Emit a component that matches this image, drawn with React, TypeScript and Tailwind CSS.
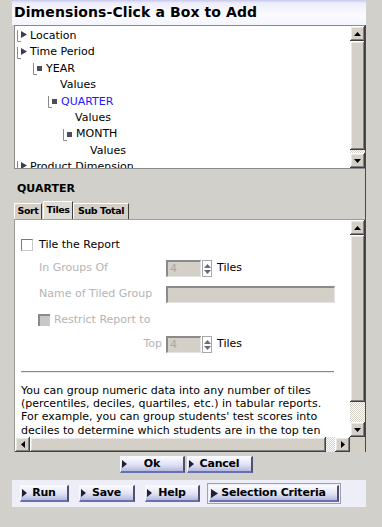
import React from 'react';

const btnFace =
  'bg-[#d4d0c8] shadow-[inset_-1px_-1px_#404040,inset_1px_1px_#ffffff,inset_-2px_-2px_#808080,inset_2px_2px_#e8e8e8]';
const checker =
  'bg-[repeating-conic-gradient(#ffffff_0_25%,#d4d0c8_0_50%)] bg-[length:2px_2px]';

const Arrow: React.FC<{ dir: 'up' | 'down' | 'left' | 'right'; color?: string }> = ({ dir, color = '#000' }) => {
  const pts = {
    up: '0,4 3.5,0 7,4',
    down: '0,0 7,0 3.5,4',
    left: '4,0 4,7 0,3.5',
    right: '0,0 4,3.5 0,7',
  }[dir];
  const vertical = dir === 'up' || dir === 'down';
  return (
    <svg width={vertical ? 7 : 4} height={vertical ? 4 : 7}>
      <polygon points={pts} fill={color} />
    </svg>
  );
};

const SbButton: React.FC<{ dir: 'up' | 'down' | 'left' | 'right' }> = ({ dir }) => (
  <div className={`w-[15px] h-[15px] shrink-0 flex items-center justify-center ${btnFace}`}>
    <Arrow dir={dir} />
  </div>
);

const VScroll: React.FC<{ track: number }> = ({ track }) => (
  <div className="w-[15px] flex flex-col shrink-0">
    <SbButton dir="up" />
    <div className={`flex-1 ${btnFace}`} />
    <div className={checker} style={{ height: track }} />
    <SbButton dir="down" />
  </div>
);

const NodeIcon: React.FC<{ kind: 'tri' | 'sq' }> = ({ kind }) => (
  <svg width="14" height="16" className="shrink-0">
    <path d="M1.5 2 V13.5 H5" fill="none" stroke="#8a8a8a" strokeWidth="1" />
    {kind === 'tri' ? (
      <polygon points="5,3 11,6.5 5,10" fill="#3c3c50" />
    ) : (
      <rect x="5" y="5" width="5" height="5" fill="#4c4c5c" />
    )}
  </svg>
);

const TreeRow: React.FC<{ indent: number; icon?: 'tri' | 'sq'; label: string; blue?: boolean }> = ({
  indent,
  icon,
  label,
  blue,
}) => (
  <div className="h-[16.4px] flex items-center whitespace-nowrap" style={{ paddingLeft: indent }}>
    {icon && <NodeIcon kind={icon} />}
    <span className={blue ? 'text-[#1a1aff]' : 'text-black'}>{label}</span>
  </div>
);

const Spinner: React.FC = () => (
  <div className="w-[10px] h-[17px] border border-[#a8a8a8] flex flex-col items-center justify-center gap-[2px] ml-[1px]">
    <Arrow dir="up" color="#6a6a7a" />
    <Arrow dir="down" color="#6a6a7a" />
  </div>
);

const DisabledInput: React.FC<{ w: number; value?: string }> = ({ w, value }) => (
  <div
    className="h-[17px] bg-[#d4d0c8] border-t-2 border-l-2 border-[#8a8a8a] border-r border-r-[#e4e4e4] border-b border-b-[#e4e4e4] text-[#a8a8a8] pl-[2px] leading-[14px]"
    style={{ width: w }}
  >
    {value}
  </div>
);

const UiButton: React.FC<{ label: string; w: number; dark?: boolean }> = ({ label, w, dark }) => (
  <div
    className="relative h-[17px] flex items-center justify-center font-bold text-[11px] text-black border-l border-t border-[#f8f8ff] border-r-2 border-r-[#505070] border-b-2 border-b-[#6870b0] bg-[linear-gradient(#fafaff,#e0e2f4_55%,#b4badf)] tracking-[-0.2px]"
    style={{ width: w }}
  >
    <span className="absolute left-[1px] top-[3px]">
      {dark ? (
        <svg width="7" height="9">
          <polygon points="0,0 7,4.5 0,9" fill="#202030" />
        </svg>
      ) : (
        <svg width="5" height="8">
          <polygon points="0,0 5,4 0,8" fill="#202030" />
        </svg>
      )}
    </span>
    {label}
  </div>
);

export default function App() {
  return (
    <div className="w-[382px] h-[527px] bg-[#d2d0ca] overflow-hidden font-['DejaVu_Sans',sans-serif] text-[11px]">
      <div className="ml-[12px] w-[354px]">
        {/* title */}
        <div className="h-[25px] bg-[linear-gradient(#c8c8f0_0,#eeeefa_3px,#fbfbff_60%,#f4f4fc)] pl-[2px] flex items-center">
          <h1 className="text-[14px] font-bold text-black leading-none tracking-[0.1px] -mt-[2px]">
            Dimensions-Click a Box to Add
          </h1>
        </div>

        <div className="ml-[2px] w-[352px] border-r border-[#4a4a4a]">
          {/* tree */}
          <div className="h-[144px] flex border-l border-t border-b border-[#8a8a8a]">
            <div className="flex-1 bg-white pt-[2px] overflow-hidden">
              <TreeRow indent={1} icon="tri" label="Location" />
              <TreeRow indent={1} icon="tri" label="Time Period" />
              <TreeRow indent={17} icon="sq" label="YEAR" />
              <TreeRow indent={45} label="Values" />
              <TreeRow indent={32} icon="sq" label="QUARTER" blue />
              <TreeRow indent={60} label="Values" />
              <TreeRow indent={47} icon="sq" label="MONTH" />
              <TreeRow indent={75} label="Values" />
              <TreeRow indent={1} icon="tri" label="Product Dimension" />
            </div>
            <VScroll track={3} />
          </div>

          {/* section */}
          <div className="mt-[13px] ml-[3px] font-bold text-[11px] leading-[13px] text-black">QUARTER</div>

          {/* tabs */}
          <div className="mt-[6px] h-[18px] flex items-end">
            <div className="h-[16px] w-[28px] bg-[#d4d0c8] border-l border-t border-white border-r border-r-[#404040] font-bold text-[9.5px] tracking-[-0.4px] flex items-center justify-center">
              Sort
            </div>
            <div className="h-[18px] w-[30px] ml-[1px] bg-[#dedcd6] border-l border-t border-white border-r border-r-[#404040] font-bold text-[9.5px] tracking-[-0.4px] flex items-start pt-[1px] justify-center">
              Tiles
            </div>
            <div className="h-[16px] w-[56px] bg-[#d4d0c8] border-l border-t border-white border-r border-r-[#404040] font-bold text-[9.5px] tracking-[-0.4px] flex items-center justify-center">
              Sub Total
            </div>
          </div>

          {/* panel */}
          <div className="border-t border-l border-[#9c9c9c] flex flex-col">
            <div className="h-[217px] flex">
              <div className="flex-1 bg-white overflow-hidden flex flex-col">
                <div className="mt-[18px] ml-[6px] h-[14px] flex items-center">
                  <div className="w-[12px] h-[12px] border-t border-l border-[#7a7a7a] border-r border-b border-r-[#c8c8c8] border-b-[#c8c8c8] bg-white" />
                  <span className="ml-[6px] text-black">Tile the Report</span>
                </div>

                <div className="mt-[8px] ml-[24px] h-[17px] flex items-center text-[#b4b4b4]">
                  <span className="w-[127px]">In Groups Of</span>
                  <DisabledInput w={35} value="4" />
                  <Spinner />
                  <span className="ml-[5px] text-black">Tiles</span>
                </div>

                <div className="mt-[9px] ml-[24px] h-[17px] flex items-center text-[#b4b4b4]">
                  <span className="w-[127px]">Name of Tiled Group</span>
                  <DisabledInput w={169} />
                </div>

                <div className="mt-[10px] ml-[23px] h-[14px] flex items-center text-[#b4b4b4]">
                  <div className="w-[12px] h-[12px] border-t-2 border-l-2 border-[#8a8a8a] bg-[#c8c8c8]" />
                  <span className="ml-[4px]">Restrict Report to</span>
                </div>

                <div className="mt-[9px] ml-[24px] h-[17px] flex items-center text-[#b4b4b4]">
                  <span className="w-[127px] text-right pr-[4px]">Top</span>
                  <DisabledInput w={35} value="4" />
                  <Spinner />
                  <span className="ml-[5px] text-black">Tiles</span>
                </div>

                <div className="mt-[18px] ml-[6px] w-[313px] border-t border-[#8a8a8a] border-b border-b-[#e8e8e8]" />

                <p className="mt-[11px] ml-[6px] leading-[13.2px] text-black whitespace-nowrap">
                  You can group numeric data into any number of tiles
                  <br />
                  (percentiles, deciles, quartiles, etc.) in tabular reports.
                  <br />
                  For example, you can group students' test scores into
                  <br />
                  deciles to determine which students are in the top ten
                </p>
              </div>
              <VScroll track={20} />
            </div>

            <div className="h-[15px] flex">
              <SbButton dir="left" />
              <div className={`flex-1 ${btnFace}`} />
              <div className={`w-[9px] ${checker}`} />
              <SbButton dir="right" />
              <div className="w-[15px] bg-[#d4d0c8]" />
            </div>
          </div>
        </div>
      </div>

      {/* ok / cancel */}
      <div className="mt-[4px] ml-[120px] flex gap-[2px]">
        <UiButton label="Ok" w={65} />
        <UiButton label="Cancel" w={66} />
      </div>

      {/* bottom toolbar */}
      <div className="mt-[7px] ml-[12px] w-[354px] h-[27px] bg-[#eeeef8] flex items-center pl-[8px]">
        <UiButton label="Run" w={49} />
        <div className="ml-[10px]">
          <UiButton label="Save" w={56} />
        </div>
        <div className="ml-[10px]">
          <UiButton label="Help" w={55} />
        </div>
        <div className="ml-[7px] border border-[#a0a0b4] p-[1px]">
          <UiButton label="Selection Criteria" w={130} dark />
        </div>
      </div>
    </div>
  );
}
